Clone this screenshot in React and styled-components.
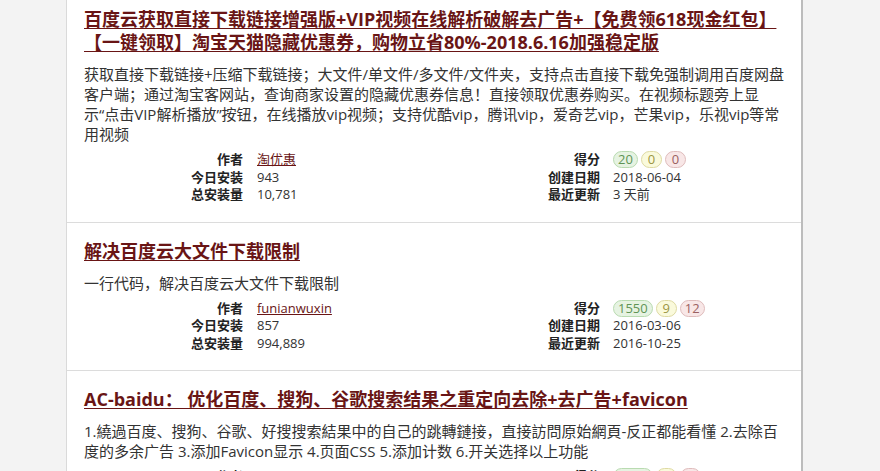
import React from "react";
import styled, { createGlobalStyle } from "styled-components";

const GlobalStyle = createGlobalStyle`
  html, body {
    margin: 0;
    padding: 0;
    height: 100%;
    overflow: hidden;
    background: #f3f3f3;
  }
  body {
    font-family: "Open Sans", "Noto Sans CJK SC", sans-serif;
    color: #333;
  }
`;

// \u2060 keeps 示 with the opening quote, as older line breaking did
const scripts = [
  {
    title:
      "百度云获取直接下载链接增强版+VIP视频在线解析破解去广告+【免费领618现金红包】【一键领取】淘宝天猫隐藏优惠券，购物立省80%-2018.6.16加强稳定版",
    desc:
      "获取直接下载链接+压缩下载链接；大文件/单文件/多文件/文件夹，支持点击直接下载免强制调用百度网盘客户端；通过淘宝客网站，查询商家设置的隐藏优惠券信息！直接领取优惠券购买。在视频标题旁上显示\u2060“点击VIP解析播放”按钮，在线播放vip视频；支持优酷vip，腾讯vip，爱奇艺vip，芒果vip，乐视vip等常用视频",
    author: "淘优惠",
    daily: "943",
    total: "10,781",
    score: ["20", "0", "0"],
    created: "2018-06-04",
    updated: "3 天前",
  },
  {
    title: "解决百度云大文件下载限制",
    desc: "一行代码，解决百度云大文件下载限制",
    author: "funianwuxin",
    daily: "857",
    total: "994,889",
    score: ["1550", "9", "12"],
    created: "2016-03-06",
    updated: "2016-10-25",
  },
  {
    title: "AC-baidu： 优化百度、搜狗、谷歌搜索结果之重定向去除+去广告+favicon",
    desc:
      "1.繞過百度、搜狗、谷歌、好搜搜索結果中的自己的跳轉鏈接，直接訪問原始網頁-反正都能看懂 2.去除百度的多余广告 3.添加Favicon显示 4.页面CSS 5.添加计数 6.开关选择以上功能",
    author: "AC-baidu",
    daily: "612",
    total: "158,430",
    score: ["1277", "4", "5"],
    created: "2017-01-18",
    updated: "5 天前",
  },
];

const Page = styled.div`
  padding-left: 66px;
`;

const Panel = styled.ol`
  list-style: none;
  margin: 0;
  padding: 0;
  width: 734px;
  background: #fff;
  border-left: 1px solid #dadada;
  border-right: 2px solid #bcbcbc;
`;

const Entry = styled.li`
  padding: 17px 14px 18px 17px;
  border-bottom: 1px solid #dcdcdc;

  &:first-child {
    padding-top: 8px;
  }
`;

const Title = styled.h2`
  margin: 0;
  font-size: 18px;
  font-weight: 700;
  line-height: 23px;
`;

const TitleLink = styled.a`
  color: #691515;
  text-decoration: underline;
  text-underline-offset: 2px;
`;

const Description = styled.p`
  margin: 10px 0 0;
  font-size: 15px;
  line-height: 20px;
  color: #333;
`;

const Stats = styled.dl`
  display: grid;
  grid-template-columns: 159px 178px 179px 1fr;
  margin: 7px 0 0;
  font-size: 13px;
  line-height: 17.5px;
`;

const Label = styled.dt`
  text-align: right;
  font-weight: 700;
  color: #222;
`;

const Value = styled.dd`
  margin: 0;
  padding-left: ${(p) => (p.$right ? "13px" : "14px")};
  color: #333;
  white-space: nowrap;
`;

const AuthorLink = styled.a`
  color: #691515;
  text-decoration: underline;
`;

const badgeColors = {
  good: { bg: "#e6f3e2", border: "#b9dbb1", color: "#5f9455" },
  ok: { bg: "#fafadc", border: "#dedaa3", color: "#9c9644" },
  bad: { bg: "#f8e7e7", border: "#dfbcbc", color: "#9b6262" },
};

const Badge = styled.span`
  display: inline-block;
  min-width: 11px;
  padding: 0 4px;
  margin-right: 3px;
  line-height: 15px;
  text-align: center;
  border-radius: 10px;
  border: 1px solid ${(p) => badgeColors[p.$kind].border};
  background: ${(p) => badgeColors[p.$kind].bg};
  color: ${(p) => badgeColors[p.$kind].color};
`;

function ScriptEntry({ s }) {
  return (
    <Entry>
      <Title>
        <TitleLink>{s.title}</TitleLink>
      </Title>
      <Description>{s.desc}</Description>
      <Stats>
        <Label>作者</Label>
        <Value>
          <AuthorLink>{s.author}</AuthorLink>
        </Value>
        <Label>得分</Label>
        <Value $right>
          <Badge $kind="good">{s.score[0]}</Badge>
          <Badge $kind="ok">{s.score[1]}</Badge>
          <Badge $kind="bad">{s.score[2]}</Badge>
        </Value>
        <Label>今日安装</Label>
        <Value>{s.daily}</Value>
        <Label>创建日期</Label>
        <Value $right>{s.created}</Value>
        <Label>总安装量</Label>
        <Value>{s.total}</Value>
        <Label>最近更新</Label>
        <Value $right>{s.updated}</Value>
      </Stats>
    </Entry>
  );
}

export default function App() {
  return (
    <>
      <GlobalStyle />
      <Page>
        <Panel>
          {scripts.map((s) => (
            <ScriptEntry key={s.title} s={s} />
          ))}
        </Panel>
      </Page>
    </>
  );
}
